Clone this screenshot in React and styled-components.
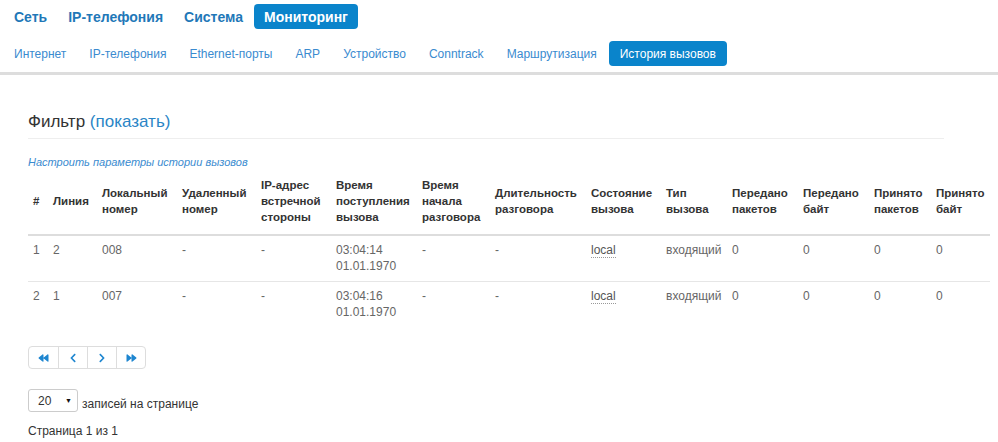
import React from "react";
import styled, { createGlobalStyle } from "styled-components";
import { FaBackward, FaForward, FaChevronLeft, FaChevronRight } from "react-icons/fa";

const GlobalStyle = createGlobalStyle`
  * { box-sizing: border-box; }
  body {
    margin: 0;
    background: #fff;
    font-family: "Liberation Sans", Arial, sans-serif;
    font-size: 12px;
    color: #333;
  }
`;

const Page = styled.div`
  width: 998px;
  min-height: 442px;
`;

const TopNav = styled.nav`
  display: flex;
  align-items: center;
  gap: 1px;
  padding: 4px 4px 0;
`;

const TopItem = styled.a`
  display: flex;
  align-items: center;
  height: 25px;
  padding: 0 10px;
  border-radius: 4px;
  font-size: 14px;
  font-weight: bold;
  color: ${(p) => (p.$active ? "#fff" : "#1f78b8")};
  background: ${(p) => (p.$active ? "#0a84cb" : "transparent")};
  cursor: pointer;
`;

const SubNav = styled.nav`
  display: flex;
  align-items: center;
  gap: 1px;
  padding: 12px 3px 6px;
  border-bottom: 3px solid #ddd;
`;

const SubItem = styled.a`
  display: flex;
  align-items: center;
  height: 25px;
  padding: 0 11px;
  border-radius: 4px;
  font-size: 12px;
  color: ${(p) => (p.$active ? "#fff" : "#3a8bcf")};
  background: ${(p) => (p.$active ? "#0a84cb" : "transparent")};
  cursor: pointer;
`;

const Content = styled.main`
  padding: 35px 0 0 28px;
`;

const FilterTitle = styled.h3`
  width: 916px;
  margin: 0;
  padding-bottom: 4px;
  border-bottom: 1px solid #eee;
  font-size: 17px;
  font-weight: normal;
  line-height: 24px;
  color: #333;
`;

const FilterLink = styled.a`
  color: #2a85c6;
  cursor: pointer;
`;

const SettingsLink = styled.a`
  display: block;
  margin-top: 16px;
  font-size: 11px;
  font-style: italic;
  line-height: 14px;
  color: #3a8bcf;
  cursor: pointer;
`;

const Table = styled.table`
  width: 962px;
  margin-top: 0;
  border-collapse: collapse;
  table-layout: fixed;
`;

const Th = styled.th`
  padding: 8px 5px 9px;
  border-bottom: 2px solid #ddd;
  text-align: left;
  vertical-align: middle;
  font-size: 11.5px;
  font-weight: bold;
  line-height: 16px;
  color: #333;
`;

const Td = styled.td`
  padding: 6px 5px 7px;
  border-top: 1px solid #e6e6e6;
  vertical-align: top;
  font-size: 12px;
  line-height: 16px;
  color: #666;
`;

const Abbr = styled.span`
  border-bottom: 1px dotted #999;
  color: #555;
`;

const Pager = styled.div`
  display: inline-flex;
  margin-top: 19px;
  border: 1px solid #ddd;
  border-radius: 4px;
`;

const PagerButton = styled.a`
  display: flex;
  align-items: center;
  justify-content: center;
  width: 29px;
  height: 21px;
  color: #1e86d0;
  border-left: ${(p) => (p.$first ? "none" : "1px solid #ddd")};
  cursor: pointer;
  svg { width: ${(p) => (p.$double ? "11px" : "8px")}; height: 10px; }
`;

const SizeRow = styled.div`
  display: flex;
  align-items: flex-end;
  gap: 4px;
  margin-top: 20px;
`;

const SizeSelect = styled.div`
  display: flex;
  align-items: center;
  justify-content: space-between;
  width: 50px;
  height: 23px;
  padding: 0 5px 0 9px;
  border: 1px solid #ccc;
  border-radius: 3px;
  font-size: 12px;
  color: #333;
  &::after {
    content: "▼";
    font-size: 7px;
    color: #111;
  }
`;

const SizeLabel = styled.span`
  font-size: 12px;
  line-height: 16px;
  color: #333;
`;

const PageInfo = styled.div`
  margin-top: 11px;
  font-size: 12px;
  line-height: 16px;
  color: #333;
`;

const topItems = ["Сеть", "IP-телефония", "Система", "Мониторинг"];
const subItems = [
  "Интернет",
  "IP-телефония",
  "Ethernet-порты",
  "ARP",
  "Устройство",
  "Conntrack",
  "Маршрутизация",
  "История вызовов",
];

const columns = [
  { w: 20, t: ["#"] },
  { w: 49, t: ["Линия"] },
  { w: 80, t: ["Локальный", "номер"] },
  { w: 79, t: ["Удаленный", "номер"] },
  { w: 75, t: ["IP-адрес", "встречной", "стороны"] },
  { w: 86, t: ["Время", "поступления", "вызова"] },
  { w: 73, t: ["Время", "начала", "разговора"] },
  { w: 96, t: ["Длительность", "разговора"] },
  { w: 75, t: ["Состояние", "вызова"] },
  { w: 66, t: ["Тип", "вызова"] },
  { w: 71, t: ["Передано", "пакетов"] },
  { w: 71, t: ["Передано", "байт"] },
  { w: 62, t: ["Принято", "пакетов"] },
  { w: 59, t: ["Принято", "байт"] },
];

const rows = [
  { n: 1, line: 2, local: "008", time: "03:04:14", date: "01.01.1970" },
  { n: 2, line: 1, local: "007", time: "03:04:16", date: "01.01.1970" },
];

const App = () => (
  <Page>
    <GlobalStyle />
    <TopNav>
      {topItems.map((item) => (
        <TopItem key={item} $active={item === "Мониторинг"}>{item}</TopItem>
      ))}
    </TopNav>
    <SubNav>
      {subItems.map((item) => (
        <SubItem key={item} $active={item === "История вызовов"}>
          {item}
        </SubItem>
      ))}
    </SubNav>

    <Content>
      <FilterTitle>
        Фильтр <FilterLink>(показать)</FilterLink>
      </FilterTitle>
      <SettingsLink>Настроить параметры истории вызовов</SettingsLink>

      <Table>
        <colgroup>
          {columns.map((c, i) => (
            <col key={i} style={{ width: c.w }} />
          ))}
        </colgroup>
        <thead>
          <tr>
            {columns.map((c, i) => (
              <Th key={i}>
                {c.t.map((line, j) => (
                  <React.Fragment key={j}>
                    {j > 0 && <br />}
                    {line}
                  </React.Fragment>
                ))}
              </Th>
            ))}
          </tr>
        </thead>
        <tbody>
          {rows.map((r) => (
            <tr key={r.n}>
              <Td>{r.n}</Td>
              <Td>{r.line}</Td>
              <Td>{r.local}</Td>
              <Td>-</Td>
              <Td>-</Td>
              <Td>
                {r.time}
                <br />
                {r.date}
              </Td>
              <Td>-</Td>
              <Td>-</Td>
              <Td><Abbr>local</Abbr></Td>
              <Td>входящий</Td>
              <Td>0</Td>
              <Td>0</Td>
              <Td>0</Td>
              <Td>0</Td>
            </tr>
          ))}
        </tbody>
      </Table>

      <Pager>
        <PagerButton $first $double><FaBackward /></PagerButton>
        <PagerButton><FaChevronLeft /></PagerButton>
        <PagerButton><FaChevronRight /></PagerButton>
        <PagerButton $double><FaForward /></PagerButton>
      </Pager>

      <SizeRow>
        <SizeSelect>20</SizeSelect>
        <SizeLabel>записей на странице</SizeLabel>
      </SizeRow>
      <PageInfo>Страница 1 из 1</PageInfo>
    </Content>
  </Page>
);

export default App;
